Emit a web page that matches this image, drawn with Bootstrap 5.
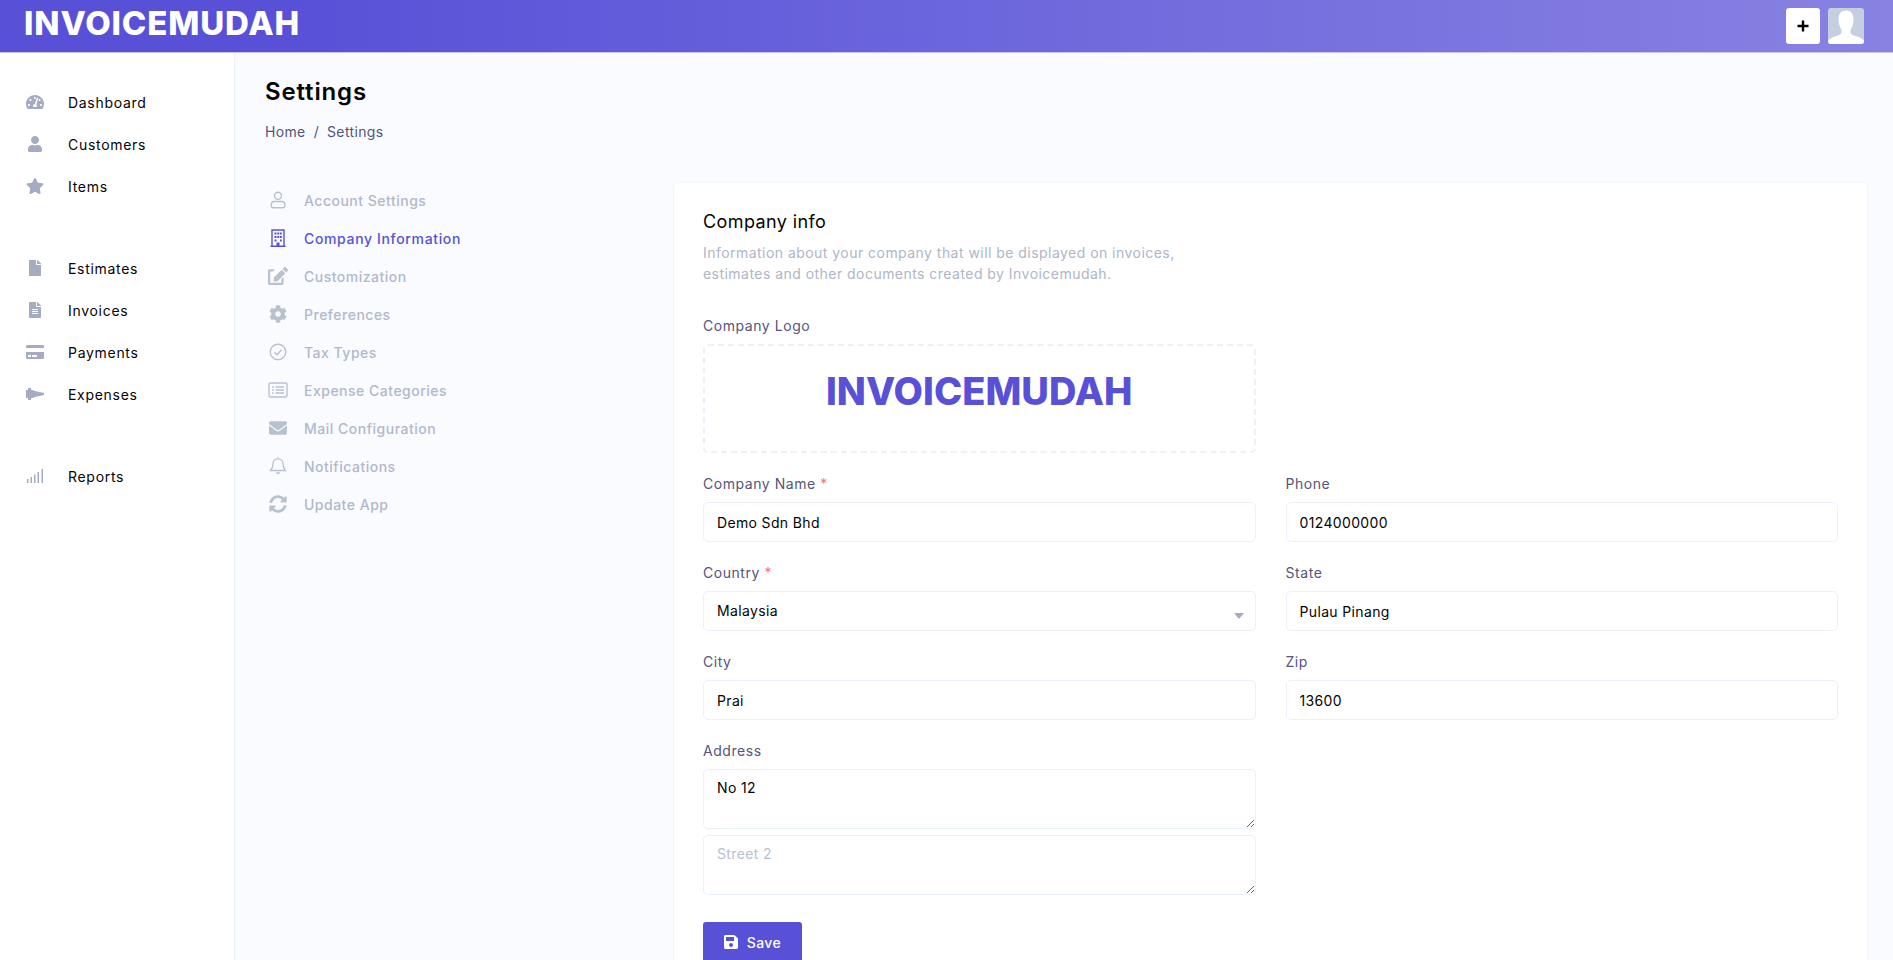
<!DOCTYPE html>
<html lang="en">
<head>
<meta charset="UTF-8">
<title>Settings - Invoicemudah</title>
<link href="https://cdn.jsdelivr.net/npm/bootstrap@5.3.2/dist/css/bootstrap.min.css" rel="stylesheet">
<style>
    html, body { height: 100%; overflow: hidden; }
    body { font-family: Inter, "Liberation Sans", sans-serif; font-size: 14px; letter-spacing: .35px; background: #f9fbff; color: #040405; }
    .top-bar { height: 53px; background: linear-gradient(90deg, #5851d8 0%, #5851d8 15%, #8882e2 100%); border-bottom: 1px solid #c9c7f1; padding: 0 29px 0 24px; }
    .brand { font-weight: 800; font-size: 33px; line-height: 1; letter-spacing: .85px; color: #fff; padding-bottom: 6px; }
    .brand-dark { color: #5851d8; font-size: 38px; letter-spacing: .05px; padding-bottom: 16px; }
    .add-btn { width: 34px; height: 36px; background: #fff; border-radius: 3px; }
    .avatar-box { width: 36px; height: 36px; background: #c5cfe0; border-radius: 3px; overflow: hidden; }
    .shell { height: calc(100vh - 53px); }
    .side { width: 235px; flex: none; background: #fff; border-right: 1px solid #ebf1fa; padding-top: 28px; }
    .side-group { margin-bottom: 40px; }
    .side-link { height: 42px; padding-left: 26px; gap: 24px; color: #040405; font-weight: 400; letter-spacing: .7px; text-decoration: none; }
    .side-link svg { width: 18px; height: 16px; fill: #a5acc1; flex: none; }
    .content { padding: 0 25px 0 30px; min-width: 0; overflow: hidden; }
    .page-title { font-size: 24px; font-weight: 600; letter-spacing: .85px; margin: 24px 0 0; line-height: 29px; color: #040405; }
    .crumbs { color: #55547a; margin-top: 15px; height: 21px; line-height: 21px; gap: 8px; }
    .work-row { margin-top: 40px; }
    .settings-nav { width: 408px; flex: none; margin-top: -1px; }
    .set-link { height: 38px; gap: 16px; padding-left: 3px; color: #b1b8cc; font-weight: 500; letter-spacing: .5px; text-decoration: none; }
    .set-link svg { width: 20px; height: 18px; fill: #b9c1d1; flex: none; }
    .set-link.on { color: #5851d8; letter-spacing: .65px; }
    .set-link.on svg { fill: #5851d8; }
    .panel { background: #fff; border: 1px solid #f2f5fb; border-radius: 5px 5px 0 0; padding: 29px 29px 0; }
    .panel-title { font-size: 18px; font-weight: 400; line-height: 20px; margin: 0; letter-spacing: .4px; }
    .panel-desc { color: #aeb6c8; width: 500px; line-height: 20.5px; margin: 11px 0 0; letter-spacing: .46px; }
    .field-label { color: #55547a; font-weight: 400; font-size: 14px; letter-spacing: .55px; line-height: 21px; margin: 0 0 8px; display: block; }
    .req { color: #fb7178; }
    .gap-row { --bs-gutter-x: 30px; --bs-gutter-y: 0; }
    .logo-row { margin-top: 31px; }
    .fields-row { margin-top: 20px; }
    .logo-box { height: 109px; border: 2px dashed #ebf1fa; border-radius: 5px; }
    .field { margin-bottom: 20px; }
    .form-control, .form-select { height: 40px; border: 1px solid #ebf1fa; border-radius: 5px; font-size: 14px; padding: 0 13px; color: #040405; letter-spacing: .35px; }
    .form-select { background-image: url("data:image/svg+xml,%3csvg xmlns='http://www.w3.org/2000/svg' viewBox='0 0 10 6'%3e%3cpath fill='%23a5acc1' d='M0 0h10L5 6z'/%3e%3c/svg%3e"); background-size: 10px 6px; background-position: right 11px top 21px; background-repeat: no-repeat; padding-bottom: 2px; }
    textarea.form-control { height: 60px; padding: 7px 13px; resize: vertical; margin-bottom: 6px; line-height: 21px; }
    .form-control::placeholder { color: #b9c1d1; }
    .save-btn { width: 99px; height: 40px; background: #5851d8; border: 0; border-radius: 3px; color: #fff; font-weight: 500; font-size: 14px; gap: 9px; margin-top: 21px; letter-spacing: .4px; }
    .save-btn svg { width: 14px; height: 16px; fill: #fff; }
</style>
</head>
<body>

<!-- Top bar -->
<header class="top-bar d-flex align-items-center justify-content-between">
    <span class="brand">INVOICEMUDAH</span>
    <div class="d-flex align-items-center gap-2">
        <a class="add-btn d-flex align-items-center justify-content-center" href="#">
            <svg width="14" height="14" viewBox="0 0 14 14"><path d="M7 1.500v11M1.500 7h11" stroke="#040405" stroke-width="2.400"/></svg>
        </a>
        <div class="avatar-box">
            <svg width="36" height="36" viewBox="0 0 36 36"><path fill="#fff" d="M18 2.500c5 0 7.500 3.500 7.500 8.500 0 4-1 8-3 11-.3 3 .5 4.500 3.500 5.500 4 1.300 7 2 10 5V36H0v-3.500c3-3 6-3.700 10-5 3-1 3.800-2.500 3.500-5.500-2-3-3-7-3-11C10.500 6 13 2.500 18 2.500z"/></svg>
        </div>
    </div>
</header>

<div class="shell d-flex">
    <!-- Sidebar -->
    <nav class="side">
        <div class="side-group">
            <a class="side-link d-flex align-items-center" href="#"><svg viewBox="0 0 576 512"><path d="M288 32C128.940 32 0 160.940 0 320c0 52.800 14.250 102.260 39.060 144.800 5.610 9.620 16.300 15.200 27.440 15.200h443c11.140 0 21.830-5.580 27.440-15.200C561.750 422.260 576 372.800 576 320c0-159.060-128.940-288-288-288zm0 64c14.710 0 26.580 10.130 30.320 23.650-1.110 2.260-2.640 4.230-3.450 6.670l-9.220 27.670c-5.130 3.490-10.970 6.010-17.640 6.010-17.670 0-32-14.330-32-32S270.330 96 288 96zM96 384c-17.670 0-32-14.330-32-32s14.330-32 32-32 32 14.330 32 32-14.330 32-32 32zm48-160c-17.670 0-32-14.330-32-32s14.330-32 32-32 32 14.330 32 32-14.330 32-32 32zm246.770-72.410l-61.330 184C343.130 347.330 352 364.540 352 384c0 11.720-3.380 22.550-8.880 32H232.880c-5.500-9.450-8.880-20.280-8.880-32 0-33.940 26.500-61.430 59.900-63.590l61.340-184.010c4.170-12.560 17.730-19.450 30.360-15.170 12.570 4.190 19.350 17.790 15.170 30.360zm14.660 57.200l15.520-46.550c3.470-1.290 7.130-2.230 11.050-2.230 17.670 0 32 14.330 32 32s-14.330 32-32 32c-11.380-.01-20.890-6.280-26.570-15.220zM480 384c-17.670 0-32-14.330-32-32s14.330-32 32-32 32 14.330 32 32-14.330 32-32 32z"/></svg>Dashboard</a>
            <a class="side-link d-flex align-items-center" href="#"><svg viewBox="0 0 448 512"><path d="M224 256c70.700 0 128-57.300 128-128S294.700 0 224 0 96 57.300 96 128s57.300 128 128 128zm89.600 32h-16.700c-22.200 10.200-46.900 16-72.900 16s-50.600-5.800-72.900-16h-16.700C60.200 288 0 348.200 0 422.400V464c0 26.500 21.500 48 48 48h352c26.500 0 48-21.500 48-48v-41.600c0-74.200-60.200-134.400-134.400-134.400z"/></svg>Customers</a>
            <a class="side-link d-flex align-items-center" href="#"><svg viewBox="0 0 576 512"><path d="M259.300 17.800L194 150.200 47.900 171.500c-26.200 3.800-36.700 36.100-17.700 54.600l105.700 103-25 145.500c-4.500 26.300 23.200 46 46.400 33.700L288 439.600l130.700 68.700c23.200 12.200 50.900-7.400 46.400-33.700l-25-145.500 105.700-103c19-18.500 8.500-50.800-17.700-54.600L382 150.200 316.700 17.800c-11.700-23.600-45.600-23.900-57.400 0z"/></svg>Items</a>
        </div>
        <div class="side-group">
            <a class="side-link d-flex align-items-center" href="#"><svg viewBox="0 0 384 512"><path d="M224 136V0H24C10.700 0 0 10.700 0 24v464c0 13.300 10.700 24 24 24h336c13.300 0 24-10.700 24-24V160H248c-13.200 0-24-10.800-24-24zm160-14.100v6.100H256V0h6.100c6.400 0 12.500 2.500 17 7l97.900 98c4.500 4.500 7 10.600 7 16.900z"/></svg>Estimates</a>
            <a class="side-link d-flex align-items-center" href="#"><svg viewBox="0 0 384 512"><path d="M224 136V0H24C10.700 0 0 10.700 0 24v464c0 13.300 10.700 24 24 24h336c13.300 0 24-10.700 24-24V160H248c-13.200 0-24-10.800-24-24zm64 236c0 6.600-5.400 12-12 12H108c-6.600 0-12-5.400-12-12v-8c0-6.600 5.400-12 12-12h168c6.600 0 12 5.400 12 12v8zm0-64c0 6.600-5.400 12-12 12H108c-6.600 0-12-5.400-12-12v-8c0-6.600 5.400-12 12-12h168c6.600 0 12 5.400 12 12v8zm0-72v8c0 6.600-5.400 12-12 12H108c-6.600 0-12-5.400-12-12v-8c0-6.600 5.400-12 12-12h168c6.600 0 12 5.400 12 12zm96-114.100v6.100H256V0h6.100c6.400 0 12.500 2.500 17 7l97.900 98c4.500 4.500 7 10.600 7 16.900z"/></svg>Invoices</a>
            <a class="side-link d-flex align-items-center" href="#"><svg viewBox="0 0 576 512"><path d="M0 432c0 26.500 21.500 48 48 48h480c26.500 0 48-21.500 48-48V256H0v176zm192-68c0-6.600 5.400-12 12-12h136c6.600 0 12 5.400 12 12v40c0 6.600-5.400 12-12 12H204c-6.600 0-12-5.400-12-12v-40zm-128 0c0-6.600 5.400-12 12-12h72c6.600 0 12 5.400 12 12v40c0 6.600-5.400 12-12 12H76c-6.600 0-12-5.400-12-12v-40zM576 80v48H0V80c0-26.500 21.500-48 48-48h480c26.500 0 48 21.500 48 48z"/></svg>Payments</a>
            <a class="side-link d-flex align-items-center" href="#"><svg viewBox="0 0 18 16"><path d="M0 4h2V2h3v1.500L9 5l9 2v2l-9 2-4 1.500V14H2v-2H0z"/></svg>Expenses</a>
        </div>
        <div class="side-group">
            <a class="side-link d-flex align-items-center" href="#"><svg viewBox="0 0 18 16"><path d="M1 11h1.500v4H1zM4.500 9H6v6H4.500zM8 6.500h1.500V15H8zM11.500 4H13v11h-1.500zM15.500 1H17v14h-1.500z"/></svg>Reports</a>
        </div>
    </nav>

    <!-- Main -->
    <main class="content flex-grow-1">
        <h1 class="page-title">Settings</h1>
        <div class="crumbs d-flex"><span>Home</span><span>/</span><span>Settings</span></div>

        <div class="work-row d-flex">
            <div class="settings-nav">
                <a class="set-link d-flex align-items-center" href="#"><svg viewBox="0 0 20 18"><path fill="none" stroke="#b9c1d1" stroke-width="1.400" d="M10 1.200a3.500 3.500 0 1 1 0 7 3.500 3.500 0 0 1 0-7zM6.500 10.500h7c2 0 3.300 1.300 3.300 3.300v.7c0 1.300-1 2.300-2.300 2.300h-9c-1.300 0-2.300-1-2.300-2.300v-.7c0-2 1.300-3.300 3.300-3.300z"/></svg>Account Settings</a>
                <a class="set-link on d-flex align-items-center" href="#"><svg viewBox="0 0 20 18"><path fill="none" stroke="#5851d8" stroke-width="1.400" d="M4 17V1h12v16M2.500 17.200h15"/><path d="M6.500 3.500h2v2h-2zM9.300 3.500h2v2h-2zM12 3.500h1.800v2H12zM6.500 7h2v2h-2zM9.300 7h2v2h-2zM12 7h1.800v2H12zM6.500 10.500h2v2h-2zM12 10.500h1.800v2H12zM8.500 13.500h3V17h-3z"/></svg>Company Information</a>
                <a class="set-link d-flex align-items-center" href="#"><svg viewBox="0 0 576 512"><path d="M402.600 83.200l90.200 90.200c3.800 3.800 3.800 10 0 13.800L274.400 405.600l-92.800 10.300c-12.400 1.400-22.900-9.100-21.500-21.500l10.300-92.800L388.800 83.200c3.800-3.800 10-3.800 13.800 0zm162-22.900l-48.800-48.800c-15.200-15.200-39.900-15.200-55.200 0l-35.400 35.400c-3.800 3.800-3.800 10 0 13.800l90.200 90.200c3.800 3.800 10 3.800 13.800 0l35.400-35.400c15.200-15.300 15.200-40 0-55.200zM384 346.200V448H64V128h73.100c3.200 0 6.200-1.300 8.500-3.500l40-40c7.600-7.600 2.200-20.500-8.500-20.500H48C21.500 64 0 85.500 0 112v352c0 26.500 21.500 48 48 48h352c26.500 0 48-21.500 48-48V306.200c0-10.700-12.900-16-20.500-8.500l-40 40c-2.200 2.300-3.500 5.300-3.500 8.500z"/></svg>Customization</a>
                <a class="set-link d-flex align-items-center" href="#"><svg viewBox="0 0 512 512"><path d="M487.400 315.700l-42.600-24.600c4.300-23.200 4.300-47 0-70.200l42.600-24.600c4.900-2.800 7.100-8.600 5.500-14-11.100-35.600-30-67.800-54.700-94.600-3.800-4.100-10-5.100-14.800-2.300L380.800 110c-17.900-15.400-38.500-27.300-60.800-35.100V25.800c0-5.600-3.900-10.500-9.400-11.700-36.700-8.200-74.300-7.800-109.200 0-5.500 1.200-9.400 6.100-9.400 11.700V75c-22.200 7.900-42.800 19.800-60.800 35.100L88.700 85.500c-4.900-2.800-11-1.900-14.800 2.300-24.700 26.700-43.600 58.900-54.700 94.600-1.700 5.400.6 11.200 5.500 14L67.300 221c-4.300 23.200-4.300 47 0 70.200l-42.600 24.600c-4.900 2.800-7.100 8.600-5.500 14 11.100 35.600 30 67.800 54.700 94.600 3.800 4.100 10 5.100 14.800 2.300l42.600-24.600c17.900 15.400 38.500 27.300 60.800 35.100v49.200c0 5.600 3.900 10.500 9.400 11.700 36.700 8.200 74.300 7.800 109.200 0 5.500-1.200 9.400-6.100 9.400-11.700v-49.200c22.200-7.900 42.800-19.800 60.800-35.100l42.600 24.600c4.900 2.800 11 1.900 14.800-2.300 24.700-26.700 43.600-58.900 54.700-94.600 1.500-5.500-.7-11.300-5.600-14.100zM256 336c-44.100 0-80-35.900-80-80s35.900-80 80-80 80 35.900 80 80-35.900 80-80 80z"/></svg>Preferences</a>
                <a class="set-link d-flex align-items-center" href="#"><svg viewBox="0 0 20 18"><circle cx="10" cy="9" r="7.800" fill="none" stroke="#b9c1d1" stroke-width="1.400"/><path fill="none" stroke="#b9c1d1" stroke-width="1.600" d="M6.500 9.200l2.500 2.500 4.500-5"/></svg>Tax Types</a>
                <a class="set-link d-flex align-items-center" href="#"><svg viewBox="0 0 20 18"><rect x="1" y="2" width="18" height="14" rx="1.500" fill="none" stroke="#b9c1d1" stroke-width="1.400"/><path fill="none" stroke="#b9c1d1" stroke-width="1.400" d="M7.500 6h8.500M7.500 9h8.500M7.500 12h8.500M4 6h1.800M4 9h1.800M4 12h1.800"/></svg>Expense Categories</a>
                <a class="set-link d-flex align-items-center" href="#"><svg viewBox="0 0 512 512"><path d="M502.300 190.800c3.900-3.100 9.700-.2 9.700 4.700V400c0 26.500-21.500 48-48 48H48c-26.500 0-48-21.500-48-48V195.600c0-5 5.700-7.800 9.700-4.700 22.400 17.400 52.100 39.500 154.100 113.600 21.100 15.400 56.700 47.800 92.200 47.600 35.700.3 72-32.800 92.300-47.600 102-74.100 131.600-96.300 154-113.700zM256 320c23.200.4 56.600-29.200 73.400-41.400 132.700-96.300 142.800-104.700 173.400-128.700 5.800-4.500 9.200-11.500 9.200-18.900v-19c0-26.500-21.500-48-48-48H48C21.500 64 0 85.500 0 112v19c0 7.400 3.400 14.300 9.200 18.900 30.600 23.900 40.700 32.400 173.400 128.700 16.800 12.200 50.200 41.800 73.400 41.400z"/></svg>Mail Configuration</a>
                <a class="set-link d-flex align-items-center" href="#"><svg viewBox="0 0 20 18"><path fill="none" stroke="#b9c1d1" stroke-width="1.300" d="M10 1.800c3 0 5 2.200 5 5 0 3.500 1 5 2.500 6.700H2.500C4 11.800 5 10.300 5 6.800c0-2.800 2-5 5-5zM10 .5v1.300"/><path d="M8.200 15.200h3.600c0 1-.8 2-1.800 2s-1.800-1-1.800-2z"/></svg>Notifications</a>
                <a class="set-link d-flex align-items-center" href="#"><svg viewBox="0 0 512 512"><path d="M370.720 133.280C339.458 104.008 298.888 87.962 255.848 88c-77.458.068-144.328 53.178-162.791 126.850-1.344 5.363-6.122 9.150-11.651 9.150H24.103c-7.498 0-13.194-6.807-11.807-14.176C33.933 94.924 134.813 8 256 8c66.448 0 126.791 26.136 171.315 68.685L463.030 40.970C478.149 25.851 504 36.559 504 57.941V192c0 13.255-10.745 24-24 24H345.941c-21.382 0-32.090-25.851-16.971-40.971l41.750-41.749zM32 296h134.059c21.382 0 32.090 25.851 16.971 40.971l-41.750 41.750c31.262 29.273 71.835 45.319 114.876 45.280 77.418-.07 144.315-53.144 162.787-126.849 1.344-5.363 6.122-9.150 11.651-9.150h57.304c7.498 0 13.194 6.807 11.807 14.176C478.067 417.076 377.187 504 256 504c-66.448 0-126.791-26.136-171.315-68.685L48.970 471.030C33.851 486.149 8 475.441 8 454.059V320c0-13.255 10.745-24 24-24z"/></svg>Update App</a>
            </div>

            <section class="panel flex-grow-1">
                <h2 class="panel-title">Company info</h2>
                <p class="panel-desc">Information about your company that will be displayed on invoices, estimates and other documents created by Invoicemudah.</p>

                <div class="row gap-row logo-row">
                    <div class="col-6">
                        <label class="field-label">Company Logo</label>
                        <div class="logo-box d-flex align-items-center justify-content-center"><span class="brand brand-dark">INVOICEMUDAH</span></div>
                    </div>
                </div>
                <div class="row gap-row fields-row">
                    <div class="col-6 field">
                        <label class="field-label">Company Name <span class="req">*</span></label>
                        <input class="form-control" value="Demo Sdn Bhd">
                    </div>
                    <div class="col-6 field">
                        <label class="field-label">Phone</label>
                        <input class="form-control" value="0124000000">
                    </div>
                    <div class="col-6 field">
                        <label class="field-label">Country <span class="req">*</span></label>
                        <select class="form-select"><option>Malaysia</option></select>
                    </div>
                    <div class="col-6 field">
                        <label class="field-label">State</label>
                        <input class="form-control" value="Pulau Pinang">
                    </div>
                    <div class="col-6 field">
                        <label class="field-label">City</label>
                        <input class="form-control" value="Prai">
                    </div>
                    <div class="col-6 field">
                        <label class="field-label">Zip</label>
                        <input class="form-control" value="13600">
                    </div>
                    <div class="col-6">
                        <label class="field-label">Address</label>
                        <textarea class="form-control">No 12</textarea>
                        <textarea class="form-control" placeholder="Street 2"></textarea>
                    </div>
                </div>
                <button class="save-btn d-flex align-items-center justify-content-center" type="button">
                    <svg viewBox="0 0 448 512"><path d="M433.941 129.941l-83.882-83.882A48 48 0 0 0 316.118 32H48C21.490 32 0 53.490 0 80v352c0 26.510 21.490 48 48 48h352c26.510 0 48-21.490 48-48V163.882a48 48 0 0 0-14.059-33.941zM224 416c-35.346 0-64-28.654-64-64 0-35.346 28.654-64 64-64s64 28.654 64 64c0 35.346-28.654 64-64 64zm96-304.520V212c0 6.627-5.373 12-12 12H76c-6.627 0-12-5.373-12-12V108c0-6.627 5.373-12 12-12h228.520c3.183 0 6.235 1.264 8.485 3.515l3.480 3.480A11.996 11.996 0 0 1 320 111.480z"/></svg>Save
                </button>
            </section>
        </div>
    </main>
</div>

<script src="https://cdn.jsdelivr.net/npm/bootstrap@5.3.2/dist/js/bootstrap.bundle.min.js"></script>
</body>
</html>
